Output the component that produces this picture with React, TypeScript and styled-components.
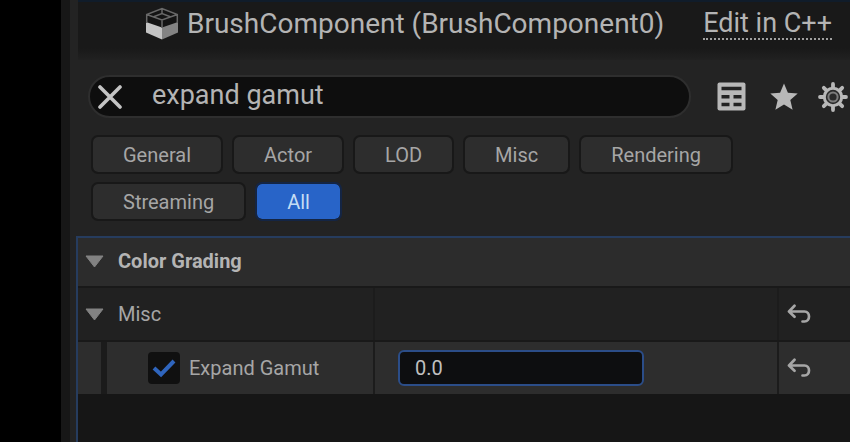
import React, { useState } from "react";
import styled, { createGlobalStyle } from "styled-components";

const GlobalStyle = createGlobalStyle`
  * { box-sizing: border-box; }
  html, body, #root { height: 100%; }
  body {
    margin: 0;
    background: #000;
    color: #b4b4b4;
    font-family: Roboto, "Liberation Sans", sans-serif;
    font-size: 20px;
    line-height: 24px;
    overflow: hidden;
  }
  button, input { font: inherit; color: inherit; }
  button { cursor: pointer; }
`;

const Window = styled.main`
  display: flex;
  flex-direction: column;
  min-height: 100%;
  margin-left: 61px;
  padding-left: 15px;
  background: linear-gradient(to right, #171717 9px, #232323 9px);
`;

const ComponentRow = styled.header`
  display: flex;
  align-items: center;
  height: 60px;
  margin-left: 2px;
  padding: 0 18px 14px 67px;
  border-top: 2px solid #101c2a;
  background: linear-gradient(#191919 80%, #212121);
`;

const ComponentName = styled.span`
  flex: 1;
  margin-left: 8px;
  font-size: 28px;
  line-height: 32px;
  white-space: nowrap;
`;

const SourceLink = styled.a`
  color: inherit;
  font-size: 27px;
  line-height: 29px;
  text-decoration: none;
  white-space: nowrap;
  border-bottom: 2px dotted #a0a0a0;
`;

const SearchRow = styled.div`
  display: flex;
  align-items: center;
  gap: 26px;
  padding: 15px 2px 0 12px;
`;

const SearchBox = styled.div`
  flex: 1;
  display: flex;
  align-items: center;
  height: 43px;
  padding: 0 20px 0 8px;
  border: 2px solid #2e2e2e;
  border-radius: 22px;
  background: #0e0e0e;
`;

const SearchInput = styled.input`
  flex: 1;
  min-width: 0;
  margin-left: 30px;
  padding: 0 0 4px;
  border: 0;
  outline: 0;
  background: transparent;
  font-size: 27px;
  line-height: 32px;
`;

const IconButton = styled.button`
  display: flex;
  padding: 0;
  border: 0;
  background: transparent;
  color: #b8b8b8;
`;

const Tools = styled.div`
  display: flex;
  align-items: center;
  gap: 20px;
`;

const Filters = styled.nav`
  display: flex;
  flex-wrap: wrap;
  gap: 8px 9px;
  padding: 17px 8px 15px 15px;
`;

const Filter = styled.button<{ $active?: boolean }>`
  height: 39px;
  padding: 0 30px;
  border: 2px solid ${(p) => (p.$active ? "#142544" : "#181818")};
  border-radius: 7px;
  background: ${(p) => (p.$active ? "#2864c8" : "#2d2d2d")};
  background-clip: padding-box;
  color: ${(p) => (p.$active ? "#c4dcf4" : "#a6a6a6")};
`;

const Details = styled.section`
  flex: 1;
  border-top: 2px solid #263c5e;
  border-left: 2px solid #263c5e;
  background: #161616;
`;

const CategoryRow = styled.div`
  display: flex;
  align-items: center;
  height: 50px;
  padding-left: 7px;
  padding-bottom: 2px;
  border-bottom: 2px solid #191919;
  background: #2c2c2c;
  font-weight: 700;
`;

const PropertyRow = styled.div<{ $nested?: boolean }>`
  display: grid;
  grid-template-columns: 295px 1fr 73px;
  height: ${(p) => (p.$nested ? "52px" : "54px")};
  border-bottom: ${(p) => (p.$nested ? "0" : "2px solid #191919")};
  background: ${(p) => (p.$nested ? "#2d2d2d" : "#212121")};
  color: #a6a6a6;
`;

const Cell = styled.div<{ $inset: number }>`
  display: flex;
  align-items: center;
  padding-left: ${(p) => p.$inset}px;
  & + & { border-left: 2px solid #1c1c1c; }
`;

const Disclosure = styled.button`
  display: flex;
  align-items: center;
  gap: 14px;
  padding: 0;
  border: 0;
  background: transparent;
  font-weight: inherit;
`;

const Indent = styled.span`
  align-self: stretch;
  width: 29px;
  margin-right: 41px;
  border-right: 6px solid #1b1b1b;
`;

const CheckLabel = styled.label`
  display: flex;
  align-items: center;
  gap: 9px;
  white-space: nowrap;
`;

const CheckMark = styled.span`
  display: grid;
  width: 32px;
  height: 32px;
  border-radius: 4px;
  background: #101010;
  > * { grid-area: 1 / 1; place-self: center; }
  input { width: 32px; height: 32px; margin: 0; opacity: 0; }
  svg { visibility: hidden; pointer-events: none; }
  input:checked + svg { visibility: visible; }
`;

const ValueInput = styled.input`
  width: 246px;
  height: 36px;
  padding: 0 15px;
  border: 2px solid #2b4d88;
  border-radius: 6px;
  outline: 0;
  background: #0d0e10;
  color: #c0c0c0;
`;

const BrushIcon = () => (
  <svg width="34" height="34" viewBox="0 0 34 34" aria-hidden="true">
    <path d="M1 7.500 17 1 33 7.500V25L17 32 1 25Z" fill="#141414" />
    <path d="M1 15 17 20.500V32.500L1 25.500Z" fill="#c4c4c4" />
    <path d="M17 20.500 33 15V25.500L17 32.500Z" fill="#848484" />
    <path d="M1.700 16V7.500L17 1.500 32.300 7.500V16M1.700 7.500 17 13 32.300 7.500M17 13V21M8 10 17 6.500 26 10M17 2V6" fill="none" stroke="#686868" strokeWidth="1.500" />
  </svg>
);

const CloseIcon = () => (
  <svg width="24" height="24" viewBox="0 0 24 24" fill="none" stroke="#c4c4c4" strokeWidth="3.600" strokeLinecap="round" aria-hidden="true">
    <path d="M2 2 22 22M22 2 2 22" />
  </svg>
);

const TableIcon = () => (
  <svg width="33" height="29" viewBox="0 0 33 29" aria-hidden="true">
    <rect x="0.500" y="0.500" width="28" height="28" rx="2" fill="#b8b8b8" />
    <path d="M4.500 6.500H24.500M4.500 14.700H12.500M16.500 14.700H24.500M4.500 22.500H12.500M16.500 22.500H24.500" stroke="#232323" strokeWidth="3.400" />
  </svg>
);

const StarIcon = () => (
  <svg width="28" height="28" viewBox="0 0 28 28" fill="#b8b8b8" aria-hidden="true">
    <path d="M14 .5 17.900 9.700 27.700 10.500 20.300 17 22.600 26.800 14 21.600 5.400 26.800 7.700 17 .3 10.500 10.100 9.700Z" />
  </svg>
);

const teeth = [0, 45, 90, 135, 180, 225, 270, 315];
const GearIcon = () => (
  <svg width="30" height="30" viewBox="0 0 30 30" aria-hidden="true">
    {teeth.map((angle) => (
      <path key={angle} d="M15 6V2" stroke="#b8b8b8" strokeWidth="3.800" strokeLinecap="round" transform={`rotate(${angle} 15 15)`} />
    ))}
    <circle cx="15" cy="15" r="8.700" fill="#2a2a2a" stroke="#b8b8b8" strokeWidth="3" />
    <circle cx="15" cy="15" r="4.600" fill="none" stroke="#7c7c7c" strokeWidth="2" />
  </svg>
);

const ArrowIcon = () => (
  <svg width="19" height="13" viewBox="0 0 19 13" aria-hidden="true">
    <path d="M1 1H18L9.500 12Z" fill="#828282" stroke="#828282" strokeLinejoin="round" />
  </svg>
);

const ResetIcon = () => (
  <svg width="24" height="20" viewBox="0 0 24 20" fill="none" stroke="#a6a6a6" strokeWidth="2.700" strokeLinecap="round" strokeLinejoin="round" aria-hidden="true">
    <path d="M7.500 1.800 2 7.500 7.500 12.800M2.500 7.500H17.500C23.500 7.500 23.500 17.500 17.500 17.500H15.500" />
  </svg>
);

const filters = ["General", "Actor", "LOD", "Misc", "Rendering", "Streaming", "All"];

export default function App() {
  const [query, setQuery] = useState("expand gamut");
  const [active, setActive] = useState("All");
  const [value, setValue] = useState("0.0");

  return (
    <>
      <GlobalStyle />
      <Window>
        <ComponentRow>
          <BrushIcon />
          <ComponentName>BrushComponent (BrushComponent0)</ComponentName>
          <SourceLink href="#source">Edit in C++</SourceLink>
        </ComponentRow>
        <SearchRow>
          <SearchBox>
            <IconButton aria-label="Clear search" onClick={() => setQuery("")}><CloseIcon /></IconButton>
            <SearchInput aria-label="Search details" value={query} onChange={(e) => setQuery(e.target.value)} />
          </SearchBox>
          <Tools>
            <IconButton aria-label="Property matrix"><TableIcon /></IconButton>
            <IconButton aria-label="Favorites"><StarIcon /></IconButton>
            <IconButton aria-label="Settings"><GearIcon /></IconButton>
          </Tools>
        </SearchRow>
        <Filters aria-label="Sections">
          {filters.map((name) => (
            <Filter key={name} $active={name === active} aria-pressed={name === active} onClick={() => setActive(name)}>
              {name}
            </Filter>
          ))}
        </Filters>
        <Details>
          <CategoryRow>
            <Disclosure aria-expanded="true"><ArrowIcon />Color Grading</Disclosure>
          </CategoryRow>
          <PropertyRow>
            <Cell $inset={7}><Disclosure aria-expanded="true"><ArrowIcon />Misc</Disclosure></Cell>
            <Cell $inset={0} />
            <Cell $inset={8}><IconButton aria-label="Reset Misc"><ResetIcon /></IconButton></Cell>
          </PropertyRow>
          <PropertyRow $nested>
            <Cell $inset={0}>
              <Indent />
              <CheckLabel>
                <CheckMark>
                  <input type="checkbox" defaultChecked />
                  <svg width="24" height="20" viewBox="0 0 24 20" fill="none" stroke="#2f65bd" strokeWidth="4" aria-hidden="true">
                    <path d="M2 10 9 16.500 22 3" />
                  </svg>
                </CheckMark>
                Expand Gamut
              </CheckLabel>
            </Cell>
            <Cell $inset={23}>
              <ValueInput aria-label="Expand Gamut value" value={value} onChange={(e) => setValue(e.target.value)} />
            </Cell>
            <Cell $inset={8}><IconButton aria-label="Reset Expand Gamut"><ResetIcon /></IconButton></Cell>
          </PropertyRow>
        </Details>
      </Window>
    </>
  );
}
